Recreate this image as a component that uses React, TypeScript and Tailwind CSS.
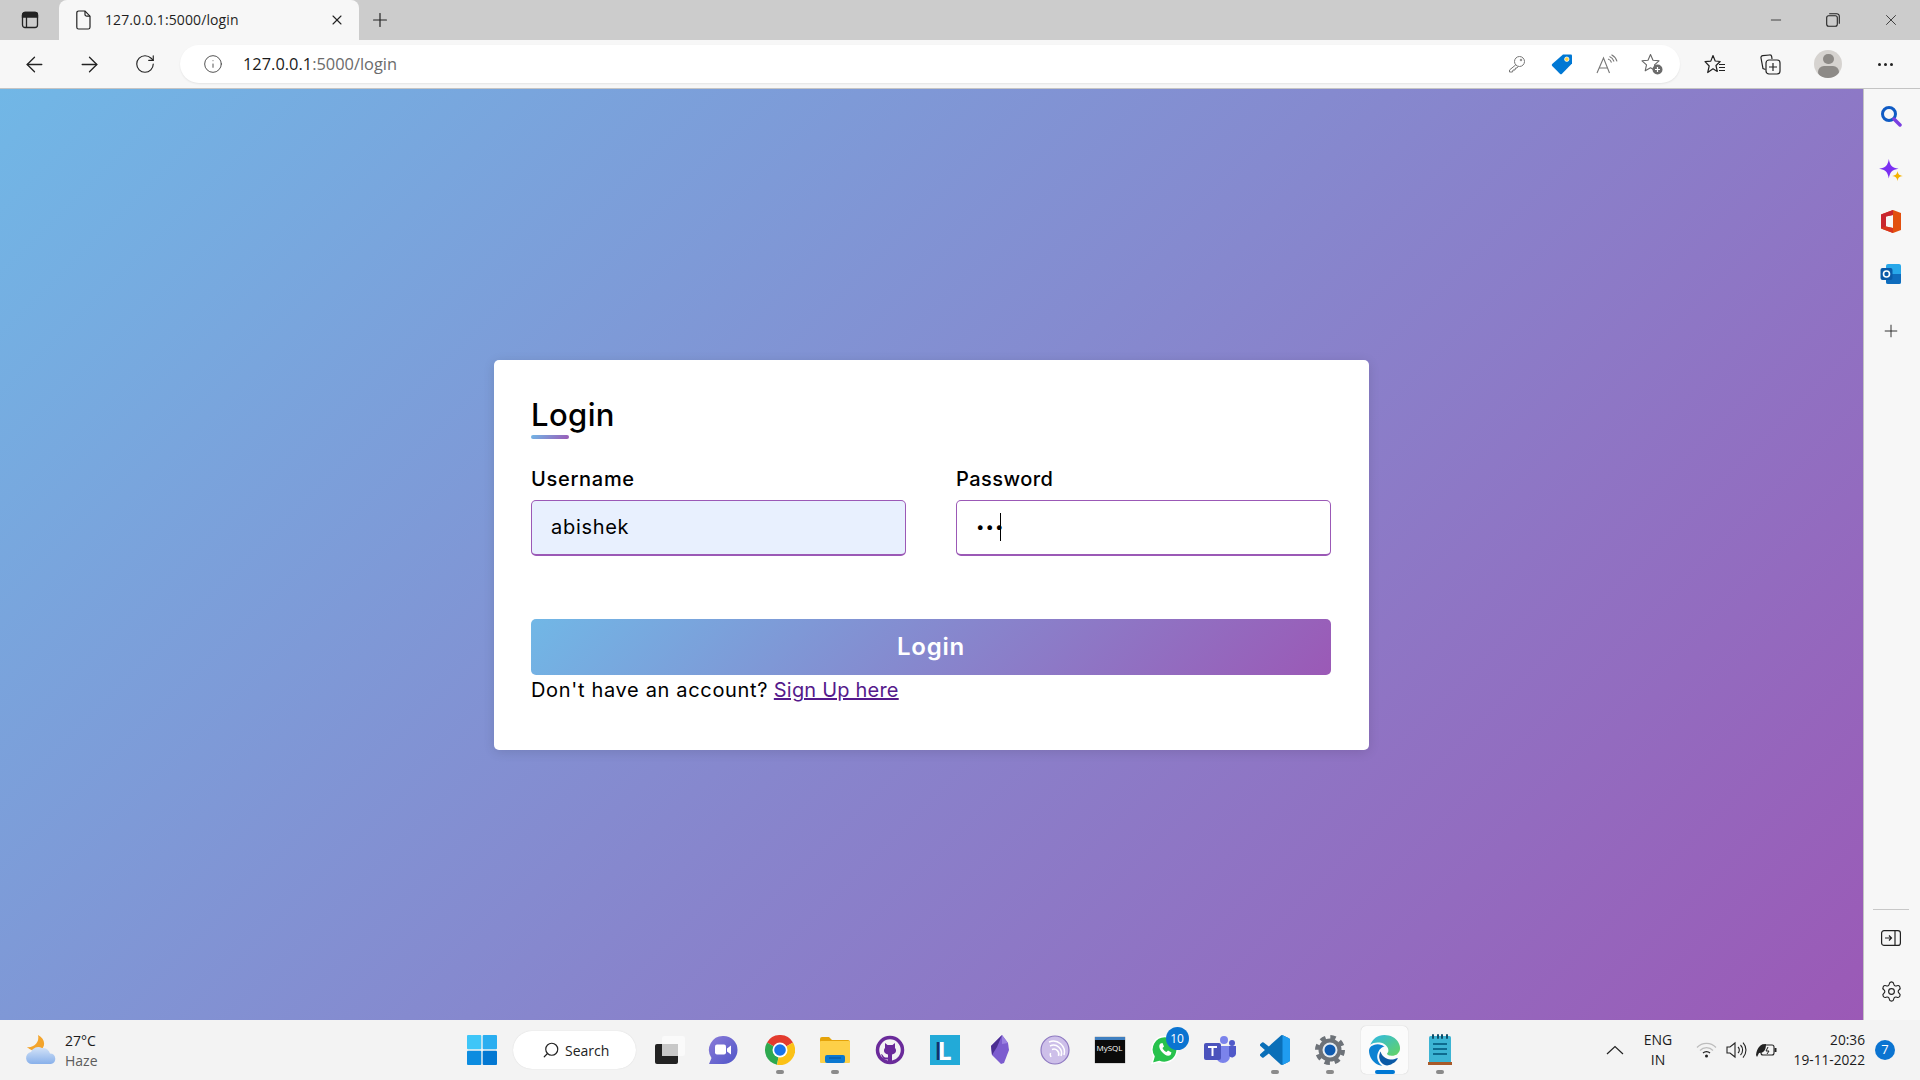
import { ArrowLeft, ArrowRight, Info, Minus, Plus, RotateCw, Search, Settings, X } from "lucide-react";
import type { ReactNode } from "react";

const uiFont = "font-['Open_Sans','Noto_Sans',sans-serif]";
const formFont = "font-['Inter','Noto_Sans',sans-serif]";

function Slot({ w, children, dot, active }: { w: string; children: ReactNode; dot?: boolean; active?: boolean }) {
  return (
    <div className={`relative flex h-full shrink-0 items-center justify-center ${w}`}>
      {active && <div className="absolute inset-x-[4px] top-[6px] bottom-[6px] rounded-[5px] bg-[#fbfbfb] shadow-[0_0_1px_#bbb]" />}
      <div className="relative flex items-center justify-center">{children}</div>
      {dot && <div className="absolute bottom-[6px] left-1/2 h-[4px] w-[8px] -translate-x-1/2 rounded-full bg-[#8a8a8a]" />}
      {active && <div className="absolute bottom-[6px] left-1/2 h-[4px] w-[20px] -translate-x-1/2 rounded-full bg-[#0078d4]" />}
    </div>
  );
}

function TabStrip() {
  return (
    <div className="flex h-[40px] shrink-0 items-stretch bg-[#cccccc]">
      <div className="flex w-[59px] items-center justify-center">
        <svg width="18" height="18" viewBox="0 0 18 18" fill="none" stroke="#222" strokeWidth="1.3">
          <rect x="1.5" y="1.5" width="15" height="15" rx="2.5" />
          <path d="M5.5 6v10.500" />
          <path d="M1.5 6V4a2.500 2.500 0 0 1 2.500-2.500h10A2.500 2.500 0 0 1 16.500 4v2z" fill="#222" />
        </svg>
      </div>
      <div className="flex w-[300px] items-center rounded-t-[8px] bg-[#f7f7f7] pl-[17px] pr-[14px]">
        <svg width="16" height="20" viewBox="0 0 16 20" fill="none" stroke="#222" strokeWidth="1.2">
          <path d="M2.600 1h6.400l5 5.200v11a1.800 1.800 0 0 1-1.800 1.800H2.600a1.800 1.800 0 0 1-1.800-1.800V2.800A1.800 1.800 0 0 1 2.600 1z" />
          <path d="M9 1v3.400A1.800 1.800 0 0 0 10.800 6.200H14" />
        </svg>
        <span className={`mb-[2px] ml-[13px] text-[14px] tracking-[0.1px] text-[#1f1f1f] ${uiFont}`}>127.0.0.1:5000/login</span>
        <X className="ml-auto" size={16} strokeWidth={1.6} color="#222" />
      </div>
      <div className="flex w-[42px] items-center justify-center">
        <Plus size={22} strokeWidth={1.3} color="#222" />
      </div>
      <div className="ml-auto flex items-center">
        <div className="flex w-[57px] justify-center">
          <Minus size={16} strokeWidth={1.2} color="#222" />
        </div>
        <div className="flex w-[58px] justify-center">
          <svg width="14" height="14" viewBox="0 0 14 14" fill="none" stroke="#222" strokeWidth="1.1">
            <rect x="0.700" y="2.700" width="10.600" height="10.600" rx="2" />
            <path d="M3.200 0.700h7.600a2.500 2.500 0 0 1 2.500 2.500v7.600" />
          </svg>
        </div>
        <div className="flex w-[58px] justify-center">
          <X size={18} strokeWidth={1.1} color="#222" />
        </div>
      </div>
    </div>
  );
}

function Toolbar() {
  return (
    <div className="flex h-[49px] shrink-0 items-center border-b border-[#c4c4c4] bg-[#f7f7f7] pl-[7px]">
      <Slot w="w-[55px]"><ArrowLeft size={25} strokeWidth={1.25} color="#222" /></Slot>
      <Slot w="w-[55px]"><ArrowRight size={25} strokeWidth={1.25} color="#222" /></Slot>
      <Slot w="w-[55px]"><RotateCw size={22} strokeWidth={1.25} color="#222" /></Slot>
      <div className="ml-[8px] flex h-[38px] w-[1500px] shrink-0 items-center rounded-full bg-white pl-[23px] pr-[5px] shadow-[0_1px_2px_rgba(0,0,0,0.08)]">
        <Info size={20} strokeWidth={1.1} color="#444" />
        <span className={`ml-[20px] text-[16.4px] text-[#6b6b6b] ${uiFont}`}>
          <span className="text-[#1a1a1a]">127.0.0.1</span>:5000/login
        </span>
        <div className="ml-auto flex h-full items-center">
          <Slot w="w-[45px]">
            <svg width="18" height="18" viewBox="0 0 18 18" fill="none" stroke="#777" strokeWidth="1">
              <circle cx="11.500" cy="6.500" r="5" />
              <circle cx="13" cy="5" r="0.800" />
              <path d="M7.800 9.800 1.500 15v2h3l.5-2h2l.5-2h1.500l1-1.500" />
            </svg>
          </Slot>
          <Slot w="w-[45px]">
            <svg width="22" height="22" viewBox="0 0 22 22">
              <path d="M12 1.500h8a1 1 0 0 1 1 1v8L11 20.800a1.500 1.500 0 0 1-2.100 0L1.200 13a1.500 1.500 0 0 1 0-2.100z" fill="#0078d4" />
              <circle cx="15.800" cy="6.200" r="2.200" fill="#ffd23f" stroke="#fff" strokeWidth="0.800" />
            </svg>
          </Slot>
          <Slot w="w-[45px]">
            <svg width="22" height="20" viewBox="0 0 22 20" fill="none" stroke="#777" strokeWidth="1.100">
              <path d="M1 19 7.500 4l6 15M3.400 14h8.400" />
              <path d="M12 5a5 5 0 0 1 3.500 3.500M13.500 2.500a8 8 0 0 1 4.500 5" />
              <path d="M15.500 .8a11 11 0 0 1 5.500 6.500" />
            </svg>
          </Slot>
          <Slot w="w-[46px]">
            <svg width="22" height="22" viewBox="0 0 22 22">
              <path d="M9.500 1.500 12 7.200l6 .6-4.500 4 1.300 6-5.300-3.100L4.200 17.800l1.300-6L1 7.800l6-.6z" fill="none" stroke="#666" strokeWidth="1.100" strokeLinejoin="round" />
              <circle cx="16.500" cy="16.500" r="5" fill="#6b6b6b" />
              <path d="M16.500 14v5M14 16.500h5" stroke="#fff" strokeWidth="1.200" />
            </svg>
          </Slot>
        </div>
      </div>
      <Slot w="w-[70px]">
        <svg width="22" height="21" viewBox="0 0 22 21" fill="none" stroke="#222" strokeWidth="1.200" strokeLinejoin="round">
          <path d="M9 1.500 11.200 7l5 .5-4.200 4 1.300 6-4.300-2.700L3.700 18.500 5.200 12 1 7.700l5.800-.6z" />
          <path d="M15 10.500h6M15 13.500h6M15 16.500h6" />
        </svg>
      </Slot>
      <Slot w="w-[40px]">
        <svg width="21" height="21" viewBox="0 0 21 21" fill="none" stroke="#222" strokeWidth="1.200">
          <path d="M5.500 15.500 3 14.500 1 4a2 2 0 0 1 1.800-2.400L9.500 1a2 2 0 0 1 2.200 1.700L12 5" />
          <rect x="6" y="6" width="14" height="14" rx="3" fill="#f7f7f7" />
          <path d="M13 9v8M9 13h8" />
        </svg>
      </Slot>
      <Slot w="w-[76px]">
        <div className="flex h-[28px] w-[28px] flex-col items-center overflow-hidden rounded-full bg-[#d6d3d0]">
          <div className="mt-[4px] h-[11px] w-[11px] rounded-full bg-[#8d8a87]" />
          <div className="mt-[2px] h-[14px] w-[21px] rounded-full bg-[#8d8a87]" />
        </div>
      </Slot>
      <Slot w="w-[38px]">
        <div className="flex gap-[3px]">
          <div className="h-[3px] w-[3px] rounded-full bg-[#222]" />
          <div className="h-[3px] w-[3px] rounded-full bg-[#222]" />
          <div className="h-[3px] w-[3px] rounded-full bg-[#222]" />
        </div>
      </Slot>
    </div>
  );
}

function LoginCard() {
  return (
    <div className={`h-[390px] w-[875px] rounded-[5px] bg-white pt-[31px] pr-[38px] pl-[37px] text-black shadow-[0_2px_12px_rgba(0,0,0,0.12)] ${formFont}`}>
      <div className="relative h-[48px] text-[31px] leading-[48px] font-medium tracking-[0.4px]">
        Login
        <div className="absolute bottom-0 left-0 h-[4px] w-[38px] rounded-[3px] bg-[linear-gradient(135deg,#71b7e6,#9b59b6)]" />
      </div>
      <div className="mt-[26px] flex gap-[50px]">
        <div className="w-[375px]">
          <label className="block h-[30px] text-[20px] leading-[28px] font-medium tracking-[0.7px]">Username</label>
          <input
            readOnly
            value="abishek"
            className="mt-[5px] h-[56px] w-full rounded-[5px] border border-b-2 border-[#9b59b6] bg-[#e8f0fe] pb-[2px] pl-[19px] text-[20px] tracking-[0.7px] outline-none"
          />
        </div>
        <div className="relative w-[375px]">
          <label className="block h-[30px] text-[20px] leading-[28px] font-medium tracking-[0.45px]">Password</label>
          <input
            readOnly
            type="password"
            value="abc"
            className="mt-[5px] h-[56px] w-full rounded-[5px] border border-b-2 border-[#9b59b6] bg-white pb-[2px] pl-[19px] text-[15px] tracking-[1px] outline-none"
          />
          <div className="absolute top-[48px] left-[44px] h-[28px] w-px bg-black" />
        </div>
      </div>
      <button className="mt-[63px] block h-[56px] w-full rounded-[5px] bg-[linear-gradient(135deg,#71b7e6,#9b59b6)] text-[24px] font-semibold tracking-[0.8px] text-white">
        Login
      </button>
      <div className="h-[30px] text-[20px] leading-[30px]">
        <span className="tracking-[0.67px]">Don't have an account?</span>{" "}
        <a href="#" className="tracking-[0.2px] text-[#551a8b] underline">Sign Up here</a>
      </div>
    </div>
  );
}

function SideBar() {
  return (
    <div className="flex w-[57px] shrink-0 flex-col items-center border-l border-[#c4c4c4] bg-[#f7f7f7] pr-[2px]">
      <div className="flex h-[54px] items-center">
        <svg width="22" height="22" viewBox="0 0 22 22" fill="none">
          <circle cx="9" cy="9" r="6.500" stroke="#0f5bc4" strokeWidth="3" />
          <path d="M14 14 20 20" stroke="#7a3fe0" strokeWidth="3.500" strokeLinecap="round" />
        </svg>
      </div>
      <div className="flex h-[52px] items-center pt-[3px]">
        <svg width="26" height="26" viewBox="0 0 24 24">
          <path d="M10 1c1 6 3 8 9 9-6 1-8 3-9 9-1-6-3-8-9-9 6-1 8-3 9-9z" fill="#7b2ff2" />
          <path d="M18 12c.5 3 1.500 4 5 4.500-3.500.5-4.500 1.500-5 5-.5-3.500-1.500-4.500-5-5 3.500-.5 4.500-1.500 5-4.500z" fill="#f5b301" />
        </svg>
      </div>
      <div className="flex h-[52px] items-center">
        <svg width="22" height="25" viewBox="0 0 22 24">
          <path fillRule="evenodd" d="M13 .5 21 3.500v17L13 23.500 1 19V5zM13 5.500 6 7v10l7 1.500z" fill="#e2500f" />
          <path d="M13 .5 1 5v14l5-2V7l7-1.500z" fill="#c9262f" />
          <path d="M1 19 6 17l7 1.500v5z" fill="#d8341f" />
        </svg>
      </div>
      <div className="flex h-[54px] items-center">
        <svg width="22" height="22" viewBox="0 0 22 22">
          <rect x="6" y="1" width="15" height="20" rx="2" fill="#28a8ea" />
          <path d="M6 11h15v8a2 2 0 0 1-2 2H8a2 2 0 0 1-2-2z" fill="#0f6cbd" />
          <rect x="0.500" y="5" width="12" height="12" rx="2" fill="#0a5aa8" />
          <circle cx="6.500" cy="11" r="3" fill="none" stroke="#fff" strokeWidth="1.600" />
        </svg>
      </div>
      <div className="flex h-[60px] items-center">
        <Plus size={20} strokeWidth={1.1} color="#222" />
      </div>
      <div className="mt-auto h-px w-[36px] bg-[#c8c8c8]" />
      <div className="flex h-[56px] items-center">
        <svg width="20" height="16" viewBox="0 0 20 16" fill="none" stroke="#222" strokeWidth="1.200">
          <rect x="0.600" y="0.600" width="18.800" height="14.800" rx="2.500" />
          <path d="M14 1v14" />
          <path d="M4 8h6.500M8 5.500 10.500 8 8 10.500" />
        </svg>
      </div>
      <div className="mb-[4px] flex h-[50px] items-center">
        <Settings size={23} strokeWidth={1.2} color="#222" />
      </div>
    </div>
  );
}

function TaskbarIcons() {
  return (
    <div className="flex h-full items-center">
      <Slot w="w-[43px]">
        <svg width="30" height="30" viewBox="0 0 30 30">
          <rect x="0" y="0" width="14.300" height="14.300" rx="1" fill="#3ec6f8" />
          <rect x="15.700" y="0" width="14.300" height="14.300" rx="1" fill="#2aaef0" />
          <rect x="0" y="15.700" width="14.300" height="14.300" rx="1" fill="#0c8ce0" />
          <rect x="15.700" y="15.700" width="14.300" height="14.300" rx="1" fill="#0378d2" />
        </svg>
      </Slot>
      <div className={`mx-[10px] flex h-[38px] w-[123px] shrink-0 items-center rounded-full bg-white pl-[29px] text-[14px] text-[#222] ${uiFont} shadow-[0_0_1px_#ccc]`}>
        <Search size={18} strokeWidth={1.6} color="#222" className="-scale-x-100" />
        <span className="ml-[5px]">Search</span>
      </div>
      <Slot w="w-[48px]">
        <div className="relative h-[28px] w-[30px]">
          <div className="absolute top-0 right-0 h-[20px] w-[23px] rounded-[2px] bg-[#fafafa]" />
          <div className="absolute bottom-0 left-0 h-[20px] w-[23px] rounded-[2px] bg-[#222]" />
          <div className="absolute top-[8px] left-[7px] h-[12px] w-[16px] bg-[#c8c8c8]" />
        </div>
      </Slot>
      <Slot w="w-[58px]">
        <svg width="30" height="30" viewBox="0 0 30 30">
          <defs>
            <linearGradient id="meet-a" x1="0" y1="0" x2="1" y2="1">
              <stop offset="0" stopColor="#8a7bd8" />
              <stop offset="1" stopColor="#4f55c8" />
            </linearGradient>
          </defs>
          <path d="M15.500 1a14 14 0 0 1 0 28H1l2.500-6A14 14 0 0 1 15.500 1z" fill="url(#meet-a)" />
          <rect x="7" y="9.500" width="11" height="10" rx="2" fill="#fff" />
          <path d="m19 13.500 4-3v9l-4-3z" fill="#fff" />
        </svg>
      </Slot>
      <Slot w="w-[55px]" dot>
        <svg width="30" height="30" viewBox="0 0 30 30">
          <path d="M15 15 2 7.500A15 15 0 0 1 28 7.500z" fill="#e33b2e" />
          <path d="M15 15 2 7.500A15 15 0 0 0 12 29.700z" fill="#2da94f" />
          <path d="M15 15 28 7.500A15 15 0 0 1 12 29.700z" fill="#fbc116" />
          <circle cx="15" cy="15" r="7.500" fill="#fff" />
          <circle cx="15" cy="15" r="5.800" fill="#1a73e8" />
        </svg>
      </Slot>
      <Slot w="w-[55px]" dot>
        <svg width="30" height="26" viewBox="0 0 30 26">
          <path d="M0 2a2 2 0 0 1 2-2h7l3 3h16a2 2 0 0 1 2 2v4H0z" fill="#e5a30a" />
          <rect x="0" y="4" width="30" height="22" rx="1" fill="#fdd048" />
          <rect x="5" y="18" width="20" height="8" rx="2" fill="#0b78d0" />
          <rect x="9" y="20.500" width="12" height="1" fill="#0a4f94" />
        </svg>
      </Slot>
      <Slot w="w-[55px]">
        <svg width="30" height="30" viewBox="0 0 30 30">
          <circle cx="15" cy="15" r="12.500" fill="#f3f3f3" stroke="#6a2a9a" strokeWidth="3.500" />
          <path d="M10 8l2.500 2h5L20 8v5c1 1 1 2 1 3 0 2-2 3-4 3.500V27h-4v-7.500c-2-.5-4-1.500-4-3.500 0-1 0-2 1-3z" fill="#6a2a9a" />
          <path d="M6 19c2 0 2 3 4.500 3.500H13v2h-3c-2 0-3-3-4-5.500z" fill="#6a2a9a" />
        </svg>
      </Slot>
      <Slot w="w-[55px]">
        <div className={`flex h-[30px] w-[30px] items-center justify-center bg-[#22aad8] text-[25px] leading-none font-bold text-white [text-shadow:-3px_0_0_#12306e] ${uiFont}`}>L</div>
      </Slot>
      <Slot w="w-[55px]">
        <svg width="20" height="30" viewBox="0 0 20 30">
          <path d="M12 0 18 8l1 7-5 13-3 1-9-9L1 11z" fill="#7c5ccf" />
          <path d="M12 0 1 11l1 9 5-8z" fill="#4a2d91" />
          <path d="M12 0 18 8l-6 1z" fill="#9a80e0" />
        </svg>
      </Slot>
      <Slot w="w-[55px]">
        <svg width="30" height="30" viewBox="0 0 30 30" fill="none">
          <circle cx="15" cy="15" r="14" fill="#cdbfe9" stroke="#8d78c0" strokeWidth="1.200" />
          <path d="M24 20a11 11 0 0 0-15-13M21 21a8 8 0 0 0-11-10M18.500 21a5 5 0 0 0-6.500-6.500M11 22c-1-2-1-3-.5-4" stroke="#fff" strokeWidth="1.500" />
        </svg>
      </Slot>
      <Slot w="w-[55px]">
        <div className="relative h-[26px] w-[30px] border-t-[3px] border-[#3f7fc0] bg-[#0a0a0a] shadow-[0_0_1px_#555]">
          <span className={`absolute top-[4px] left-[2px] text-[8px] leading-none text-white ${uiFont}`}>MySQL</span>
        </div>
      </Slot>
      <Slot w="w-[55px]">
        <div className="relative">
          <svg width="30" height="30" viewBox="0 0 30 30">
            <path d="M15 1.500a13 13 0 0 0-11 20L2 28.500l7.200-2A13 13 0 1 0 15 1.500z" fill="#27c24c" stroke="#fff" strokeWidth="1.500" />
            <path d="M10.500 8.500c-2 1.500-1.500 5 1.500 8.500s6 4.500 8.500 3l1-2.500-3.500-2-1.500 1.500c-1.500-.5-3.500-2.500-4-4l1.500-1.500-1.500-3.500z" fill="#fff" />
          </svg>
          <div className={`absolute -top-[8px] -right-[9px] flex h-[23px] w-[23px] items-center justify-center rounded-full bg-[#0b74d1] text-[12px] text-white ${uiFont}`}>10</div>
        </div>
      </Slot>
      <Slot w="w-[55px]">
        <svg width="32" height="30" viewBox="0 0 32 30">
          <circle cx="20" cy="5" r="4" fill="#7b83eb" />
          <circle cx="28" cy="8" r="3" fill="#5059c9" />
          <path d="M12 11h14v10a7 7 0 0 1-14 0z" fill="#7b83eb" />
          <path d="M25 11h7v8a4 4 0 0 1-7 2z" fill="#5059c9" />
          <rect x="0" y="8" width="17" height="17" rx="2" fill="#4b53bc" />
          <path d="M4 12h9M8.500 12v9" stroke="#fff" strokeWidth="2" />
        </svg>
      </Slot>
      <Slot w="w-[55px]" dot>
        <svg width="30" height="30" viewBox="0 0 100 100">
          <path d="M70.900 99.300a6.200 6.200 0 0 0 5-.2l20.600-9.900a6.200 6.200 0 0 0 3.500-5.600V16.400a6.200 6.200 0 0 0-3.500-5.600L75.900.9a6.200 6.200 0 0 0-7 1.200L29.400 38.100 12.200 25a4.200 4.200 0 0 0-5.300.2l-5.500 5a4.200 4.200 0 0 0 0 6.200L16.300 50 1.400 63.600a4.200 4.200 0 0 0 0 6.200l5.500 5a4.200 4.200 0 0 0 5.300.2l17.200-13.100 39.500 36.100a6.200 6.200 0 0 0 2 1.300zM75 27.300 45 50l30 22.700z" fill="#0a6fb8" />
          <path d="M75 .5 96.500 10.800a6.200 6.200 0 0 1 3.500 5.600v67.200a6.200 6.200 0 0 1-3.500 5.600L75.900 99.100 75 99.500z" fill="#1f9cf0" />
        </svg>
      </Slot>
      <Slot w="w-[55px]" dot>
        <svg width="30" height="30" viewBox="0 0 30 30">
          <circle cx="15" cy="15" r="11.500" fill="#6d7278" />
          <circle cx="15" cy="15" r="13" fill="none" stroke="#6d7278" strokeWidth="4" strokeDasharray="5.400 4.800" />
          <circle cx="15" cy="15" r="7.500" fill="#e6edf3" />
          <circle cx="15" cy="15" r="5.500" fill="#0f5bb0" />
        </svg>
      </Slot>
      <Slot w="w-[55px]" active>
        <svg width="31" height="31" viewBox="0 0 24 24">
          <defs>
            <linearGradient id="edge-a" x1="0" y1="0" x2="1" y2="1">
              <stop offset="0" stopColor="#2fb8e8" />
              <stop offset="1" stopColor="#64d45f" />
            </linearGradient>
          </defs>
          <path d="M11.960.06q1.700 0 3.330.39 1.630.38 3.070 1.150 1.430.77 2.620 1.930 1.180 1.160 1.980 2.700.49.94.76 1.960.28 1 .28 2.080 0 .89-.23 1.700-.24.8-.69 1.480-.45.68-1.100 1.220-.64.53-1.450.88-.54.24-1.110.36-.58.13-1.160.13-.42 0-.97-.03-.54-.03-1.100-.12-.55-.1-1.050-.28-.5-.19-.84-.5-.12-.09-.23-.24-.1-.16-.1-.33 0-.15.16-.35.16-.2.35-.5.2-.28.36-.68.16-.4.16-.95 0-1.060-.4-1.960-.4-.91-1.060-1.640-.66-.74-1.520-1.280-.86-.55-1.790-.89-.84-.3-1.720-.44-.87-.14-1.760-.14-1.550 0-3.060.45T.94 7.550q.71-1.740 1.810-3.130Q3.860 3 5.240 2.010q1.380-.98 2.980-1.480Q9.840.06 11.960.06z" fill="url(#edge-a)" />
          <path d="M6.360 16.590q0 1.100.27 2.150.27 1.060.78 2.030.51.96 1.240 1.770.74.82 1.660 1.400-1.470-.2-2.800-.74-1.330-.55-2.480-1.370-1.150-.83-2.080-1.900-.92-1.070-1.580-2.330T.36 14.940Q0 13.540 0 12.060q0-.81.32-1.490.31-.68.83-1.230.53-.55 1.200-.96.66-.4 1.350-.66.74-.27 1.500-.39.78-.12 1.550-.12.7 0 1.420.1.72.12 1.400.35.68.23 1.320.57.63.35 1.160.83-.35 0-.7.07-.33.07-.65.23v-.02q-.63.28-1.200.74-.57.46-1.050 1.040-.48.58-.87 1.260-.38.67-.65 1.390-.27.71-.42 1.440-.15.72-.15 1.380z" fill="#0c82d2" />
          <path d="M21.860 17.860q.14 0 .25.12.1.13.1.25t-.11.33l-.32.46-.43.53-.44.5q-.21.25-.38.42l-.22.23q-.58.53-1.340 1.040-.76.51-1.600.91-.86.4-1.740.64t-1.670.24q-.9 0-1.690-.28-.8-.28-1.480-.78-.68-.5-1.220-1.170-.53-.66-.92-1.440-.38-.77-.58-1.600-.2-.83-.2-1.670 0-1 .32-1.960.33-.97.87-1.800.14.95.55 1.770.41.82 1.020 1.500.6.68 1.380 1.210.78.54 1.640.9.86.36 1.770.56.92.2 1.800.2 1.120 0 2.180-.24 1.060-.23 2.060-.72l.2-.1.2-.05z" fill="#0b5aa6" />
        </svg>
      </Slot>
      <Slot w="w-[55px]" dot>
        <svg width="24" height="32" viewBox="0 0 24 32">
          <rect x="1" y="2" width="22" height="27" rx="1.500" fill="#3cb4d4" />
          <rect x="0" y="28" width="24" height="3" fill="#a85a2a" />
          <path d="M5 1v3M10 1v3M14 1v3M19 1v3" stroke="#0e4d6a" strokeWidth="2" strokeLinecap="round" />
          <path d="M5 10h14M5 15h14M5 20h14" stroke="#0e6b8f" strokeWidth="2" />
        </svg>
      </Slot>
    </div>
  );
}

function Tray() {
  return (
    <div className={`ml-auto flex h-full items-center text-[14px] text-[#1b1b1b] ${uiFont}`}>
      <svg width="18" height="10" viewBox="0 0 18 10" fill="none" stroke="#222" strokeWidth="1.200">
        <path d="M1 9 9 1.500 17 9" />
      </svg>
      <div className="ml-[16px] flex w-[36px] flex-col items-center leading-[20px]">
        <span>ENG</span>
        <span>IN</span>
      </div>
      <div className="ml-[20px] flex items-center gap-[9px]">
        <svg width="21" height="16" viewBox="0 0 21 16" fill="none" stroke="#bdbdbd" strokeWidth="1.200">
          <path d="M1 5.500a13 13 0 0 1 19 0M4 8.500a9 9 0 0 1 13 0" />
          <path d="M7 11a5 5 0 0 1 7 0" stroke="#222" />
          <circle cx="10.500" cy="14" r="1.500" fill="#222" stroke="none" />
        </svg>
        <svg width="21" height="18" viewBox="0 0 21 18" fill="none" stroke="#222" strokeWidth="1.100">
          <path d="M1 6v6h3l5 4V2L4 6z" />
          <path d="M12 6a4 4 0 0 1 0 6M14.500 4a7 7 0 0 1 0 10M17 1.500a11 11 0 0 1 0 15" />
        </svg>
        <svg width="21" height="16" viewBox="0 0 21 16">
          <rect x="5" y="3" width="13" height="10" rx="2" fill="none" stroke="#222" strokeWidth="1.100" />
          <rect x="18.500" y="6" width="2" height="4" fill="#222" />
          <path d="M0 13C1 5 5 2 10 2c0 6-2 9-7 9l-2 4z" fill="#222" />
          <path d="M12 5 10 9h3l-2 3" fill="none" stroke="#222" />
        </svg>
      </div>
      <div className="ml-[12px] flex w-[76px] flex-col items-end leading-[20px] text-[13.7px]">
        <span>20:36</span>
        <span>19-11-2022</span>
      </div>
      <div className="mr-[25px] ml-[10px] flex h-[20px] w-[20px] items-center justify-center rounded-full bg-[#0b74d1] text-[13px] text-white">7</div>
    </div>
  );
}

function Taskbar() {
  return (
    <div className="flex h-[60px] shrink-0 items-center bg-[#f3f3f3]">
      <div className={`flex h-full w-[460px] shrink-0 items-center pl-[24px] text-[14px] ${uiFont}`}>
        <svg width="34" height="32" viewBox="0 0 34 32">
          <defs>
            <linearGradient id="cloud-a" x1="0" y1="0" x2="0" y2="1">
              <stop offset="0" stopColor="#d5e4f8" />
              <stop offset="1" stopColor="#88b0ea" />
            </linearGradient>
          </defs>
          <path d="M14 1C22 5 22 14 15 17 11 18 6 16 3 13 9 14 16 9 14 1z" fill="#f3a42c" />
          <path d="M8 30a6 6 0 0 1-1-11.900 7.500 7.500 0 0 1 11-4.100 7 7 0 0 1 8 5.500A5.300 5.300 0 0 1 27 30z" fill="url(#cloud-a)" />
        </svg>
        <div className="ml-[7px] flex flex-col pt-[1px] leading-[20px]">
          <span className="text-[#1b1b1b]">27°C</span>
          <span className="text-[#5c5c5c]">Haze</span>
        </div>
      </div>
      <TaskbarIcons />
      <Tray />
    </div>
  );
}

export default function App() {
  return (
    <div className="flex h-screen w-screen flex-col overflow-hidden">
      <TabStrip />
      <Toolbar />
      <div className="flex min-h-0 flex-1">
        <main className="flex flex-1 items-center justify-center bg-[linear-gradient(135deg,#71b7e6,#9b59b6)] pt-[1px]">
          <LoginCard />
        </main>
        <SideBar />
      </div>
      <Taskbar />
    </div>
  );
}
